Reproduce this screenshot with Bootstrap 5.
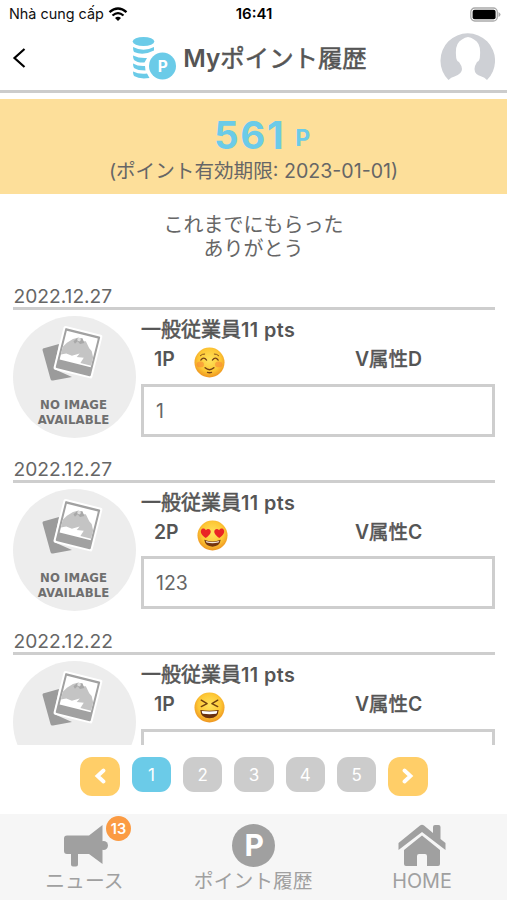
<!DOCTYPE html>
<html lang="ja">
<head>
<meta charset="utf-8">
<meta name="viewport" content="width=device-width, initial-scale=1">
<title>Myポイント履歴</title>
<link href="https://cdn.jsdelivr.net/npm/bootstrap@5.3.0/dist/css/bootstrap.min.css" rel="stylesheet">
<style>
body{font-family:"Inter","Noto Sans CJK JP",sans-serif;color:#555;background:#fff;height:900px;overflow:hidden}
svg{display:block;flex:none}
.jp{font-weight:400;-webkit-text-stroke:.55px #555}
.status{height:28px;color:#111;font-size:14.4px;line-height:28px;padding:0 6px 0 9px}
.status>*{flex:1 1 0}
.clock{color:#000;font-weight:600;font-size:15px;padding-right:2px}
.topbar{height:65px;border-bottom:3px solid #ccc;padding:0 12px 0 12px}
.title{font-size:24.4px;line-height:38px;font-weight:600;color:#555;white-space:nowrap;margin:-2px 0 0 7px}
.points{height:95px;margin-top:5.5px;background:#fddf9a;padding-top:16px}
.total{font-size:38.5px;line-height:40px;font-weight:700;color:#6bcbe8;gap:10px;padding-left:18px}
.total span{letter-spacing:1.7px}
.total small{font-size:23px;line-height:40px;padding-top:3px;font-weight:700;margin-right:1px}
.expiry{font-size:19.6px;line-height:30px;color:#666;margin-top:-2px}
.lead-in{font-size:20px;line-height:24px;height:91.5px;padding-top:19px;color:#666}
.history{height:460px;overflow:hidden;padding:0 12.5px}
.entry{height:172.7px}
.date{height:25px;border-bottom:3px solid #cecece;font-size:19.2px;line-height:22px;color:#666;padding-left:1px}
.body-row{padding-top:6px;gap:5.5px}
.sender{font-size:20px;line-height:28px;height:26px;font-weight:600;white-space:nowrap}
.sender span{font-size:19.8px;letter-spacing:.4px}
.sender .jp{font-size:20px;letter-spacing:0}
.meta{height:41.5px;font-size:19.4px;line-height:35px;font-weight:600;padding-left:13px}
.face{margin:5px 0 0 18px}
.face-wide{margin-left:19.5px}
.attr{width:139.5px}
.msg{height:53px;border:3px solid #cecece;padding-left:12px;font-size:19.5px;line-height:48px;color:#666}
.pager{height:69px;padding:11.5px 0 0 1px;gap:11.9px}
.pg{width:39.4px;height:35.5px;border-radius:11px;background:#ccc;color:#fff;font-size:17px;line-height:36px;padding:0}
.pg.on{background:#6bcbe8}
.pg.step{height:39.5px;background:#ffce68;border-radius:12px}
.tabs{height:86px;background:#f6f6f6;color:#a0a0a0;font-size:19.8px;line-height:26px}
.tabs>*{width:168.8px;padding-top:9px}
.horn{transform:translateX(2px)}
.count{position:absolute;left:106px;top:2px;width:25px;height:25px;border-radius:50%;background:#fb9b43;color:#fff;font-size:14.5px;font-weight:600;line-height:25px}
</style>
<script src="https://cdn.jsdelivr.net/npm/bootstrap@5.3.0/dist/js/bootstrap.bundle.min.js"></script>
</head>
<body>
<svg width="0" height="0" class="position-absolute">
<defs>
<radialGradient id="skin" cx=".5" cy=".42" r=".58"><stop offset="0" stop-color="#ffe35c"/><stop offset=".65" stop-color="#fdc735"/><stop offset="1" stop-color="#ee9420"/></radialGradient>
<symbol id="noimg" viewBox="0 0 123 122">
<ellipse cx="61.5" cy="61" rx="61.5" ry="61" fill="#ededed"/>
<path d="M30 32.5 46 28 41 53 59 61 40 64.500Q38 65 37.500 63L29.500 34Q29.500 33 30 32.500Z" fill="#9b9b9b"/>
<g transform="translate(51 9.500) rotate(14)"><rect width="40" height="45" rx="2" fill="#fff"/><rect x="2" y="2" width="36" height="41" rx="1" fill="#a1a1a1"/><rect x="4" y="4.500" width="32" height="29.500" fill="#fff"/>
<path d="M4 29V21l3-5 5-5 5-3 4 3 4-1 5 6 3 2 3 6v8.500H25l2-6-7 1 2-4-7 4-6-1Z" fill="#c4c4c4"/><path d="m13 13 3-4 5-1 3 4-4 2-3-2-2 3Z" fill="#a8a8a8"/><circle cx="18" cy="10" r="1.800" fill="#ddd"/></g>
<g font-family="DejaVu Sans,sans-serif" font-weight="700" font-size="11.700" fill="#6f6f6f"><text x="27" y="93" textLength="67">NO IMAGE</text><text x="24.700" y="108" textLength="71.500">AVAILABLE</text></g>
</symbol>
<symbol id="smile" viewBox="0 0 32 32"><circle cx="16" cy="16" r="15.500" fill="url(#skin)"/><ellipse cx="6.500" cy="18" rx="3.800" ry="3" fill="#f77b35" opacity=".5"/><ellipse cx="25.500" cy="18" rx="3.800" ry="3" fill="#f77b35" opacity=".5"/><g fill="none" stroke="#754016" stroke-width="1.300" stroke-linecap="round"><path d="M7 13.500q3-4 6 0M19 13.500q3-4 6 0"/><path d="M6.500 9q2-2 4.500-1.800M25.500 9q-2-2-4.500-1.800" stroke-width=".9"/><path d="M11.500 21.500q4.500 4 9 0M14 26.200q2 .8 4 0" stroke-width="1.500"/></g></symbol>
<symbol id="love" viewBox="0 0 32 32"><circle cx="16" cy="16" r="15.500" fill="url(#skin)"/><path id="ht" d="M9 18.500C5 15.800 3.200 12.800 4.300 10.300c1.100-2.200 3.900-1.800 4.900.2 1.500-1.900 4.400-1.400 4.900.9.500 2.700-2.200 5.200-5.100 7.100Z" fill="#ea2525"/><use href="#ht" transform="translate(32 0) scale(-1 1)"/><path d="M7.500 20.500q8.500 3.500 17 0-1 7-8.500 7t-8.500-7Z" fill="#75350f"/><path d="M9 21.700q7 2.200 14 0l-.8 1.500q-6.200 1.500-12.400 0Z" fill="#f3e8dc"/></symbol>
<symbol id="laugh" viewBox="0 0 32 32"><circle cx="16" cy="16" r="15.500" fill="url(#skin)"/><path d="m7.500 8.500 6 3.500-6 3M24.500 8.500l-6 3.500 6 3" fill="none" stroke="#70400f" stroke-width="1.500" stroke-linecap="round" stroke-linejoin="round"/><path d="M6.500 18.500q9.500 1.500 19 0-.5 8.500-9.500 8.500t-9.500-8.500Z" fill="#69300f"/><path d="M8 19.500q8 1 16 0-.2 2-1 3-7 1-14 0-.8-1-1-3Z" fill="#fff"/></symbol>
</defs>
</svg>

<div class="status d-flex align-items-center">
<div class="d-flex align-items-center"><span>Nhà cung cấp</span>
<svg width="20" height="14" viewBox="0 0 19 14" class="ms-1"><path d="M1 5.200q8.500-7.400 17 0M4 8.500q5.500-4.800 11 0" fill="none" stroke="#000" stroke-width="2.300"/><path d="M6.500 11q3-2.500 6 0l-3 3Z"/></svg></div>
<div class="clock text-center">16:41</div>
<div class="d-flex justify-content-end"><svg width="31" height="15" viewBox="0 0 31 15"><rect x=".8" y="1" width="26.500" height="13" rx="4" fill="#fff" stroke="#aaa" stroke-width="1.300"/><rect x="2.600" y="2.700" width="23" height="9.500" rx="2" fill="#000"/><path d="M28.500 5q2 1 2 2.500t-2 2.500Z" fill="#aaa"/></svg></div>
</div>

<header class="topbar d-flex align-items-center justify-content-between">
<svg width="55" height="22" viewBox="0 0 55 22"><path d="m12.500 1-10 9 10 9" fill="none" stroke="#000" stroke-width="2.200"/></svg>
<div class="d-flex align-items-center me-2">
<svg width="44" height="44" viewBox="0 0 44 44"><g fill="#6bcbe8"><ellipse cx="11.500" cy="4.500" rx="10.800" ry="4.500"/><path d="M1 10q10.500 5.500 21 0v3.500q-10.500 5.500-20 1.500-1-1-1-5ZM1 18.500q6 3 14 2.500l-2.500 4.500q-7 .5-10.500-2.500-1-1-1-4.500ZM1 26.500q5 3 12 2.500l.5 4.500q-8 0-11.500-2.500-1-1-1-4.500ZM1 34.500q6 3 14 2l2.500 4.500q-10 1.500-15.500-2-1-1-1-4.500Z"/><circle cx="30.500" cy="29" r="13.500"/></g><text x="30.700" y="34.700" font-size="15.500" font-weight="700" fill="#fff" text-anchor="middle">P</text></svg>
<span class="title">My<span class="jp">ポイント履歴</span></span></div>
<svg width="55" height="52" viewBox="0 0 55 52"><path d="M8.500 47A27.300 27.300 0 1 1 47 47q-2.500-3-5.500-3.500-7-2-7-7.500 0-3 2.500-7 3-1 3-7 1-12-6-15.500-6-5-12 0-7 3.500-6 15.500 0 6 3 7 3 4 3 7 0 5-7.500 7.500-3.500.5-6 3.500Z" fill="#ced0d5"/></svg>
</header>

<section class="points text-center">
<div class="total d-flex justify-content-center"><span>561</span><small>P</small></div>
<div class="expiry">(ポイント有効期限: 2023-01-01)</div>
</section>
<div class="lead-in text-center">これまでにもらった<br>ありがとう</div>

<main class="history">
<article class="entry"><div class="date">2022.12.27</div>
<div class="body-row d-flex"><svg width="123" height="122"><use href="#noimg"/></svg>
<div class="flex-grow-1"><div class="sender"><span class="jp">一般従業員</span><span>11 pts</span></div>
<div class="meta d-flex"><span>1P</span><svg class="face face-wide" width="31" height="31"><use href="#smile"/></svg><span class="attr ms-auto">V<span class="jp">属性</span>D</span></div>
<div class="msg">1</div></div></div></article>
<article class="entry"><div class="date">2022.12.27</div>
<div class="body-row d-flex"><svg width="123" height="122"><use href="#noimg"/></svg>
<div class="flex-grow-1"><div class="sender"><span class="jp">一般従業員</span><span>11 pts</span></div>
<div class="meta d-flex"><span>2P</span><svg class="face" width="31" height="31"><use href="#love"/></svg><span class="attr ms-auto">V<span class="jp">属性</span>C</span></div>
<div class="msg">123</div></div></div></article>
<article class="entry"><div class="date">2022.12.22</div>
<div class="body-row d-flex"><svg width="123" height="122"><use href="#noimg"/></svg>
<div class="flex-grow-1"><div class="sender"><span class="jp">一般従業員</span><span>11 pts</span></div>
<div class="meta d-flex"><span>1P</span><svg class="face face-wide" width="31" height="31"><use href="#laugh"/></svg><span class="attr ms-auto">V<span class="jp">属性</span>C</span></div>
<div class="msg"></div></div></div></article>
</main>

<nav class="pager d-flex justify-content-center align-items-start">
<button class="pg step btn border-0 d-flex align-items-center justify-content-center"><svg width="12" height="16" viewBox="0 0 12 16"><path d="M9.500 2.500 3.500 8l6 5.500" fill="none" stroke="#fff" stroke-width="3.800" stroke-linecap="round"/></svg></button>
<button class="pg on btn border-0">1</button><button class="pg btn border-0">2</button><button class="pg btn border-0">3</button><button class="pg btn border-0">4</button><button class="pg btn border-0">5</button>
<button class="pg step btn border-0 d-flex align-items-center justify-content-center"><svg width="12" height="16" viewBox="0 0 12 16"><path d="m2.500 2.500 6 5.500-6 5.500" fill="none" stroke="#fff" stroke-width="3.800" stroke-linecap="round"/></svg></button>
</nav>

<footer class="tabs d-flex text-center">
<div class="position-relative"><svg class="horn mx-auto" width="44" height="45" viewBox="0 0 44 45"><path d="M3 12.500h22L38.500 2v39L25 31H14v10.500q0 2-2 2H9q-2 0-2-2V31H3q-3 0-3-3V15.500q0-3 3-3Z" fill="#a0a0a0"/><circle cx="39.500" cy="22.500" r="4.500" fill="#a0a0a0"/></svg><span class="count">13</span>ニュース</div>
<div><svg class="mx-auto" width="44" height="45" viewBox="0 0 44 45"><circle cx="22.500" cy="22.500" r="21.500" fill="#a0a0a0"/><text x="23.300" y="33" text-anchor="middle" font-size="30" font-weight="700" fill="#fff">P</text></svg>ポイント履歴</div>
<div><svg class="mx-auto" width="48" height="45" viewBox="0 0 48 45"><g fill="#a0a0a0"><path d="M.5 20 22 2.500q2-1.500 4 0L35 10V4q0-2 2-2h3.500q2 0 2 2v12l5 4v7L24 9 .500 27Z"/><path d="M6 27 24 12.500 42 27v14q0 2-2 2H29V33q0-2-2-2h-6q-2 0-2 2v10H8q-2 0-2-2Z"/></g></svg>HOME</div>
</footer>
</body>
</html>
